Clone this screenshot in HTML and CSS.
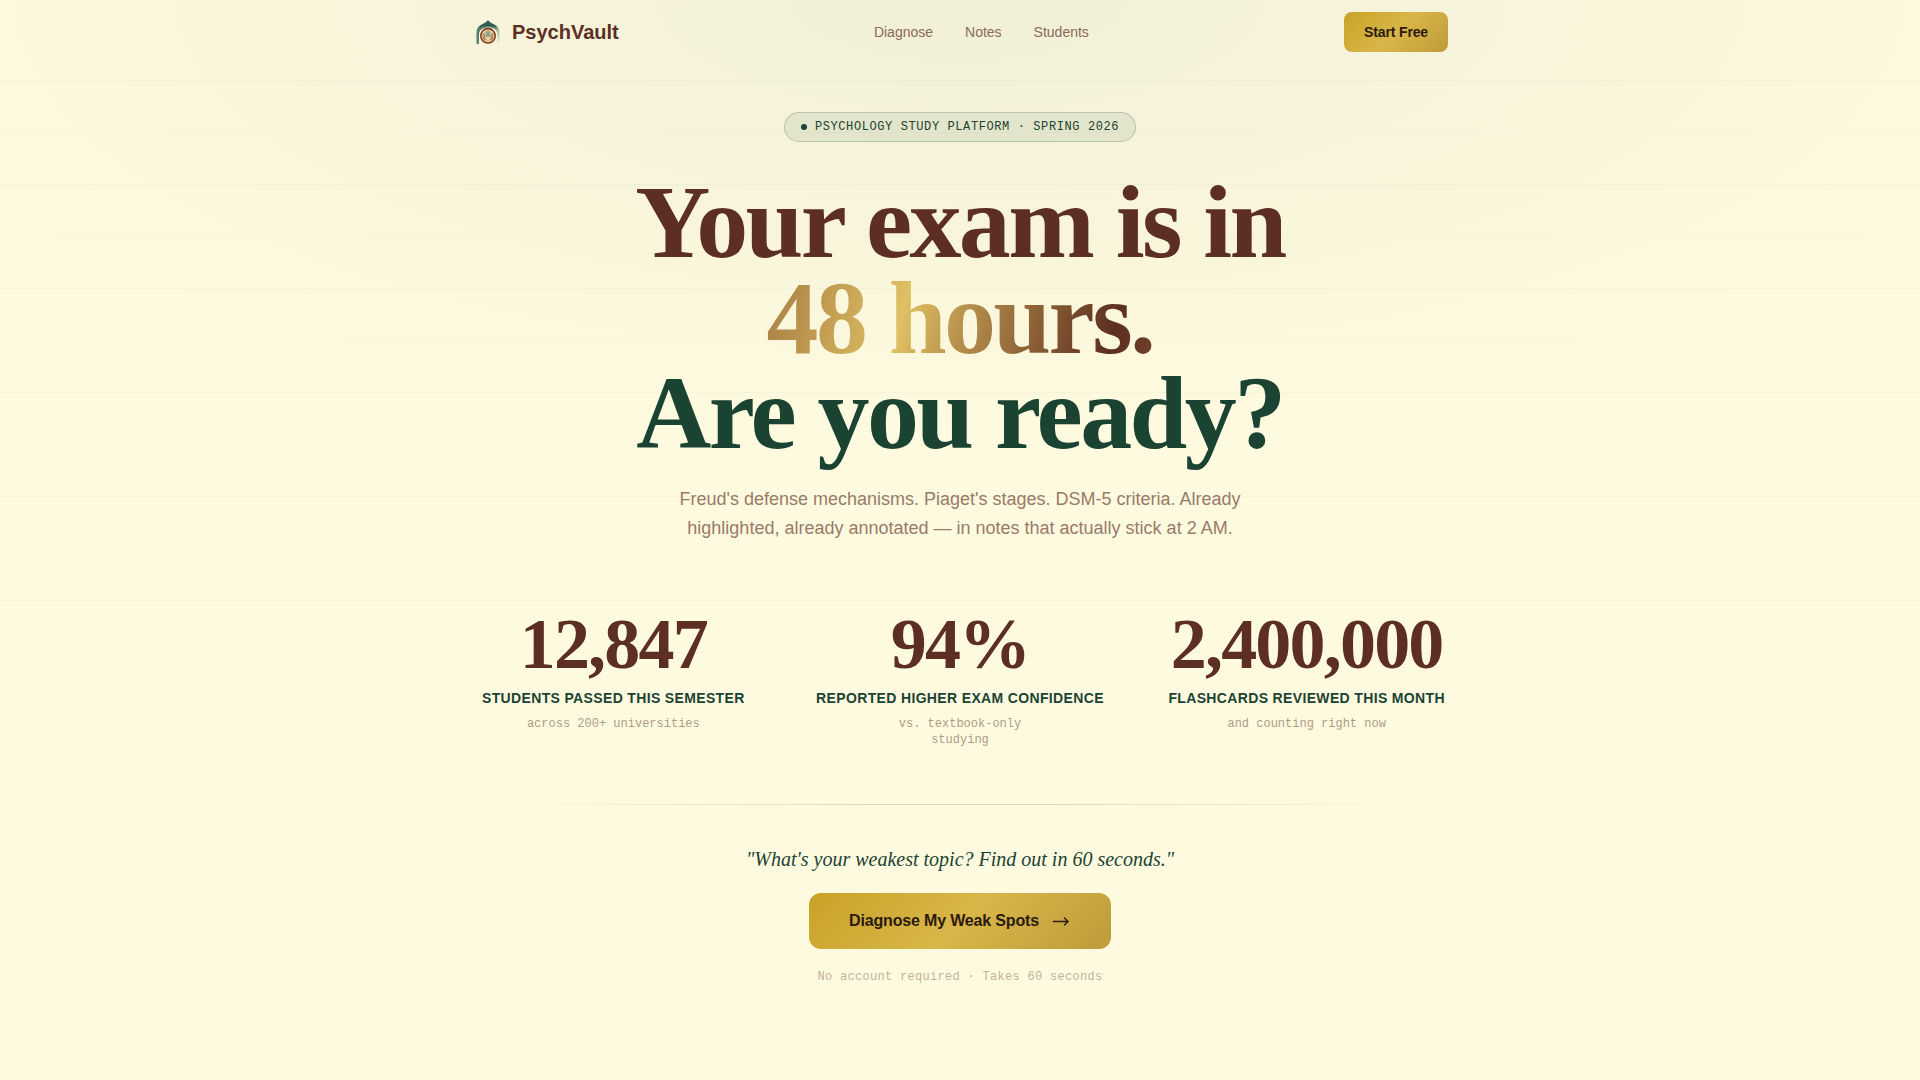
FILE: index.html
```html
<!DOCTYPE html>
<html lang="en">
<head>
<meta charset="utf-8">
<meta name="viewport" content="width=device-width, initial-scale=1">
<title>PsychVault</title>
<link rel="stylesheet" href="styles.css">
</head>
<body>
<div class="page">
  <header class="header">
    <a class="brand" href="#">
      <svg class="brand-mark" viewBox="0 0 32 32" aria-hidden="true">
        <defs>
          <linearGradient id="arch" x1="0" x2="1" y1="0.2" y2="1">
            <stop offset="0" stop-color="#4f7868"/>
            <stop offset="0.5" stop-color="#5f8574"/>
            <stop offset="0.9" stop-color="#8aa08c" stop-opacity="0.2"/>
          </linearGradient>
        </defs>
        <path d="M4.500 28V17C4.500 13 6 10 9.500 8.500C13 7 14.500 6 16 4.200C17.500 6 19 7 22.500 8.500C26 10 27.500 13 27.500 17V26H25.500V18C25 13 21 11.500 16 11.500C11 11.500 7 13.500 7 19V28Z" fill="url(#arch)"/>
        <path d="M7 11.500C9 8 13.500 8 16 4.200C18.500 8 23 8 25 11.500Q16 8.500 7 11.500Z" fill="#32594c"/>
        <circle cx="16" cy="19.800" r="7.200" fill="#f4e3bd" stroke="#7d3c22" stroke-width="1.600"/>
        <circle cx="16" cy="19.800" r="5.300" fill="#ead9ae" stroke="#c89b62" stroke-width="0.700"/>
        <path d="M13.500 21V18a2.500 3 0 0 1 5 0V21Z" fill="#93a184"/>
        <path d="M12 17.500V23H14.300M20 17.500V23H17.700" fill="none" stroke="#8c4a26" stroke-width="1"/>
      </svg>
      <span>PsychVault</span>
    </a>
    <nav class="nav" aria-label="Main">
      <a href="#diagnose">Diagnose</a>
      <a href="#notes">Notes</a>
      <a href="#students">Students</a>
    </nav>
    <button class="button button-small" type="button">Start Free</button>
  </header>

  <main class="main">
    <section class="hero">
      <p class="badge"><span class="badge-dot"></span>PSYCHOLOGY STUDY PLATFORM · SPRING 2026</p>
      <h1 class="title">
        Your exam is in<br>
        <span class="title-time">48 hours.</span><br>
        <span class="title-ask">Are you ready?</span>
      </h1>
      <p class="lead">Freud's defense mechanisms. Piaget's stages. DSM-5 criteria. Already highlighted, already annotated — in notes that actually stick at 2 AM.</p>
    </section>

    <section class="stats" id="students">
      <div class="stat">
        <p class="stat-value">12,847</p>
        <p class="stat-label">STUDENTS PASSED THIS SEMESTER</p>
        <p class="stat-note">across 200+ universities</p>
      </div>
      <div class="stat">
        <p class="stat-value">94%</p>
        <p class="stat-label">REPORTED HIGHER EXAM CONFIDENCE</p>
        <p class="stat-note">vs. textbook-only studying</p>
      </div>
      <div class="stat">
        <p class="stat-value">2,400,000</p>
        <p class="stat-label">FLASHCARDS REVIEWED THIS MONTH</p>
        <p class="stat-note">and counting right now</p>
      </div>
    </section>

    <hr class="divider">

    <section class="cta" id="diagnose">
      <p class="cta-quote">"What's your weakest topic? Find out in 60 seconds."</p>
      <button class="button button-large" type="button">
        Diagnose My Weak Spots
        <svg class="arrow" viewBox="0 0 20 20" aria-hidden="true"><path d="M2.500 10.500H17M13.500 7L17 10.500L13.500 14"/></svg>
      </button>
      <p class="cta-note">No account required · Takes 60 seconds</p>
    </section>
  </main>
</div>
</body>
</html>
```
FILE: styles.css
```css
:root {
  --cream: #fefae0;
  --brown: #5c2e24;
  --green: #1b4332;
  --sans: "Liberation Sans", Arial, sans-serif;
  --serif: "Liberation Serif", "Times New Roman", serif;
  --mono: "Liberation Mono", "Courier New", monospace;
}

* { box-sizing: border-box; }

body {
  margin: 0;
  background: var(--cream);
  color: var(--brown);
  font-family: var(--sans);
}

p, h1 { margin: 0; }

.page {
  position: relative;
  min-height: 100vh;
  background: radial-gradient(ellipse 60% 40% at 50% 0, rgba(27, 67, 50, 0.06), transparent);
}

/* Ruled notebook lines behind the hero */
.page::before {
  content: "";
  position: absolute;
  inset: 80px 0 auto;
  height: 573px;
  background: repeating-linear-gradient(rgba(27, 67, 50, 0.03) 0 1px, transparent 1px 52px);
  pointer-events: none;
}

.header,
.main {
  position: relative;
  max-width: 1024px;
  margin: 0 auto;
  padding: 0 24px;
}

.header {
  display: flex;
  align-items: center;
  justify-content: space-between;
  height: 64px;
}

.brand {
  display: flex;
  align-items: center;
  gap: 8px;
  color: var(--brown);
  font-size: 20px;
  font-weight: 700;
  line-height: 28px;
  text-decoration: none;
}

.brand-mark {
  width: 32px;
  height: 32px;
}

.nav {
  display: flex;
  gap: 32px;
}

.nav a {
  color: #8a6a5c;
  font-size: 14px;
  line-height: 20px;
  text-decoration: none;
}

.button {
  display: inline-flex;
  align-items: center;
  justify-content: center;
  border: 0;
  background: linear-gradient(135deg, #c9a227 0%, #d8b648 50%, #bf9b39 100%);
  color: #2c1a10;
  font-family: var(--sans);
  font-weight: 700;
  letter-spacing: -0.01em;
  cursor: pointer;
}

.button-small {
  height: 40px;
  padding: 0 20px;
  border-radius: 8px;
  font-size: 14px;
}

.button-large {
  gap: 12px;
  height: 56px;
  padding: 0 40px;
  border-radius: 12px;
  font-size: 16px;
}

.arrow {
  width: 20px;
  height: 20px;
  fill: none;
  stroke: currentColor;
  stroke-width: 1.5;
  stroke-linecap: round;
  stroke-linejoin: round;
}

.hero {
  display: flex;
  flex-direction: column;
  align-items: center;
  padding-top: 48px;
  text-align: center;
}

.badge {
  display: flex;
  align-items: center;
  gap: 8px;
  padding: 6px 16px;
  border: 1px solid rgba(27, 67, 50, 0.2);
  border-radius: 999px;
  background: rgba(27, 67, 50, 0.08);
  color: var(--green);
  font-family: var(--mono);
  font-size: 12px;
  letter-spacing: 0.05em;
  line-height: 16px;
}

.badge-dot {
  width: 6px;
  height: 6px;
  border-radius: 50%;
  background: var(--green);
}

.title {
  margin-top: 32px;
  font-family: var(--serif);
  font-size: 104px;
  font-weight: 700;
  letter-spacing: -0.025em;
  line-height: 0.92;
}

.title-time {
  background: linear-gradient(105deg, #a67c42 0%, #dfc064 36%, #b08848 54%, #8f6538 67%, #5c2e20 88%, #74432c 100%);
  -webkit-background-clip: text;
  background-clip: text;
  color: transparent;
}

.title-ask { color: var(--green); }

.lead {
  max-width: 576px;
  margin-top: 24px;
  color: #997b68;
  font-size: 18px;
  line-height: 1.625;
}

.stats {
  display: grid;
  grid-template-columns: repeat(3, minmax(0, 1fr));
  gap: 64px;
  margin-top: 64px;
}

.stat {
  display: flex;
  flex-direction: column;
  align-items: center;
  gap: 8px;
  text-align: center;
}

.stat-value {
  font-family: var(--serif);
  font-size: 72px;
  font-weight: 700;
  letter-spacing: -0.025em;
  line-height: 1;
}

.stat-label {
  color: var(--green);
  font-size: 14px;
  font-weight: 700;
  letter-spacing: 0.025em;
  line-height: 20px;
  white-space: nowrap;
}

.stat-note {
  max-width: 180px;
  color: #ae9c84;
  font-family: var(--mono);
  font-size: 12px;
  line-height: 16px;
}

.divider {
  height: 1px;
  margin: 56px 0 0;
  border: 0;
  background: linear-gradient(90deg, transparent, rgba(27, 67, 50, 0.2), transparent);
}

.cta {
  display: flex;
  flex-direction: column;
  align-items: center;
  gap: 20px;
  padding: 40px 0;
}

.cta-quote {
  color: var(--green);
  font-family: var(--serif);
  font-size: 20px;
  font-style: italic;
  line-height: 28px;
}

.cta-note {
  color: #c3b299;
  font-family: var(--mono);
  font-size: 12px;
  letter-spacing: 0.025em;
  line-height: 16px;
}
```
